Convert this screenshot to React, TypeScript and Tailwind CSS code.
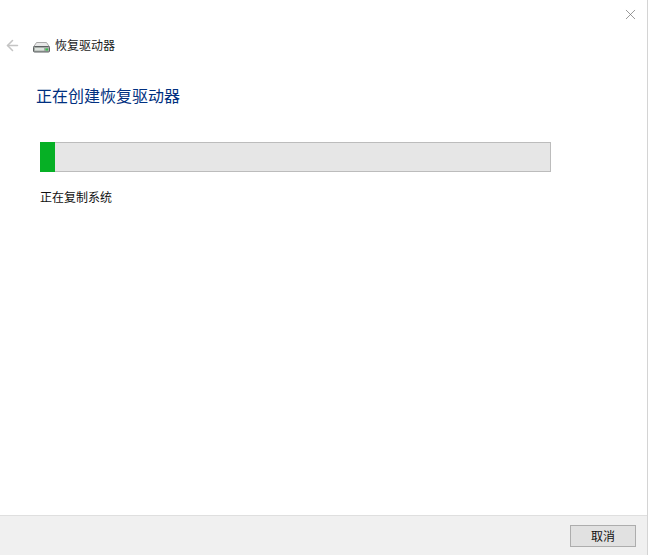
import { ArrowLeft, X } from "lucide-react";

const font = { fontFamily: '"Noto Sans CJK SC", "Liberation Sans", sans-serif' };

function DriveIcon() {
    return (
        <svg width="18" height="12" viewBox="0 0 18 12" className="mt-[4px] shrink-0">
            <path d="M3.5 1.5 H13.5 L16.5 6 H0.5 Z" fill="#e8e8e8" stroke="#a8a8a8" />
            <rect x="0.5" y="5.5" width="16" height="5.5" rx="1" fill="#a6aca8" stroke="#5d6162" />
            <rect x="2" y="7" width="9" height="2.5" fill="#dde3de" />
            <rect x="12.5" y="7.5" width="2.5" height="2" fill="#35c14a" />
        </svg>
    );
}

export default function App() {
    return (
        <div style={font} className="flex h-[555px] w-[648px] flex-col overflow-hidden border-r border-[#d4d4d4] bg-white text-black">
            <div className="flex h-[32px] justify-end pr-[8px] pt-[6px]">
                <X size={17} strokeWidth={1} className="text-[#707070]" />
            </div>
            <div className="flex h-[26px] items-center pl-[4px]">
                <ArrowLeft size={17} strokeWidth={2.2} className="text-[#c4c4c4]" />
                <div className="ml-[12px] flex items-center gap-[4px]">
                    <DriveIcon />
                    <span className="text-[12px] leading-[18px] text-[#1a1a1a]">恢复驱动器</span>
                </div>
            </div>
            <div className="flex flex-1 flex-col pl-[36px] pt-[25px]">
                <h1 className="text-[16px] leading-[24px] font-normal text-[#003080]">正在创建恢复驱动器</h1>
                <div className="ml-[4px] mt-[35px] h-[30px] w-[511px] border border-[#bcbcbc] bg-[#e6e6e6]">
                    <div className="-ml-px -mt-px h-[30px] w-[15px] bg-[#06b025]" />
                </div>
                <p className="ml-[4px] mt-[16px] text-[12px] leading-[18px] text-[#111111]">正在复制系统</p>
            </div>
            <div className="flex h-[40px] justify-end border-t border-[#dfdfdf] bg-[#f0f0f0] pr-[11px] pt-[9px]">
                <button className="h-[22px] w-[66px] border border-[#adadad] bg-[#e1e1e1] text-[12px] leading-[18px] text-[#111111]">取消</button>
            </div>
        </div>
    );
}
